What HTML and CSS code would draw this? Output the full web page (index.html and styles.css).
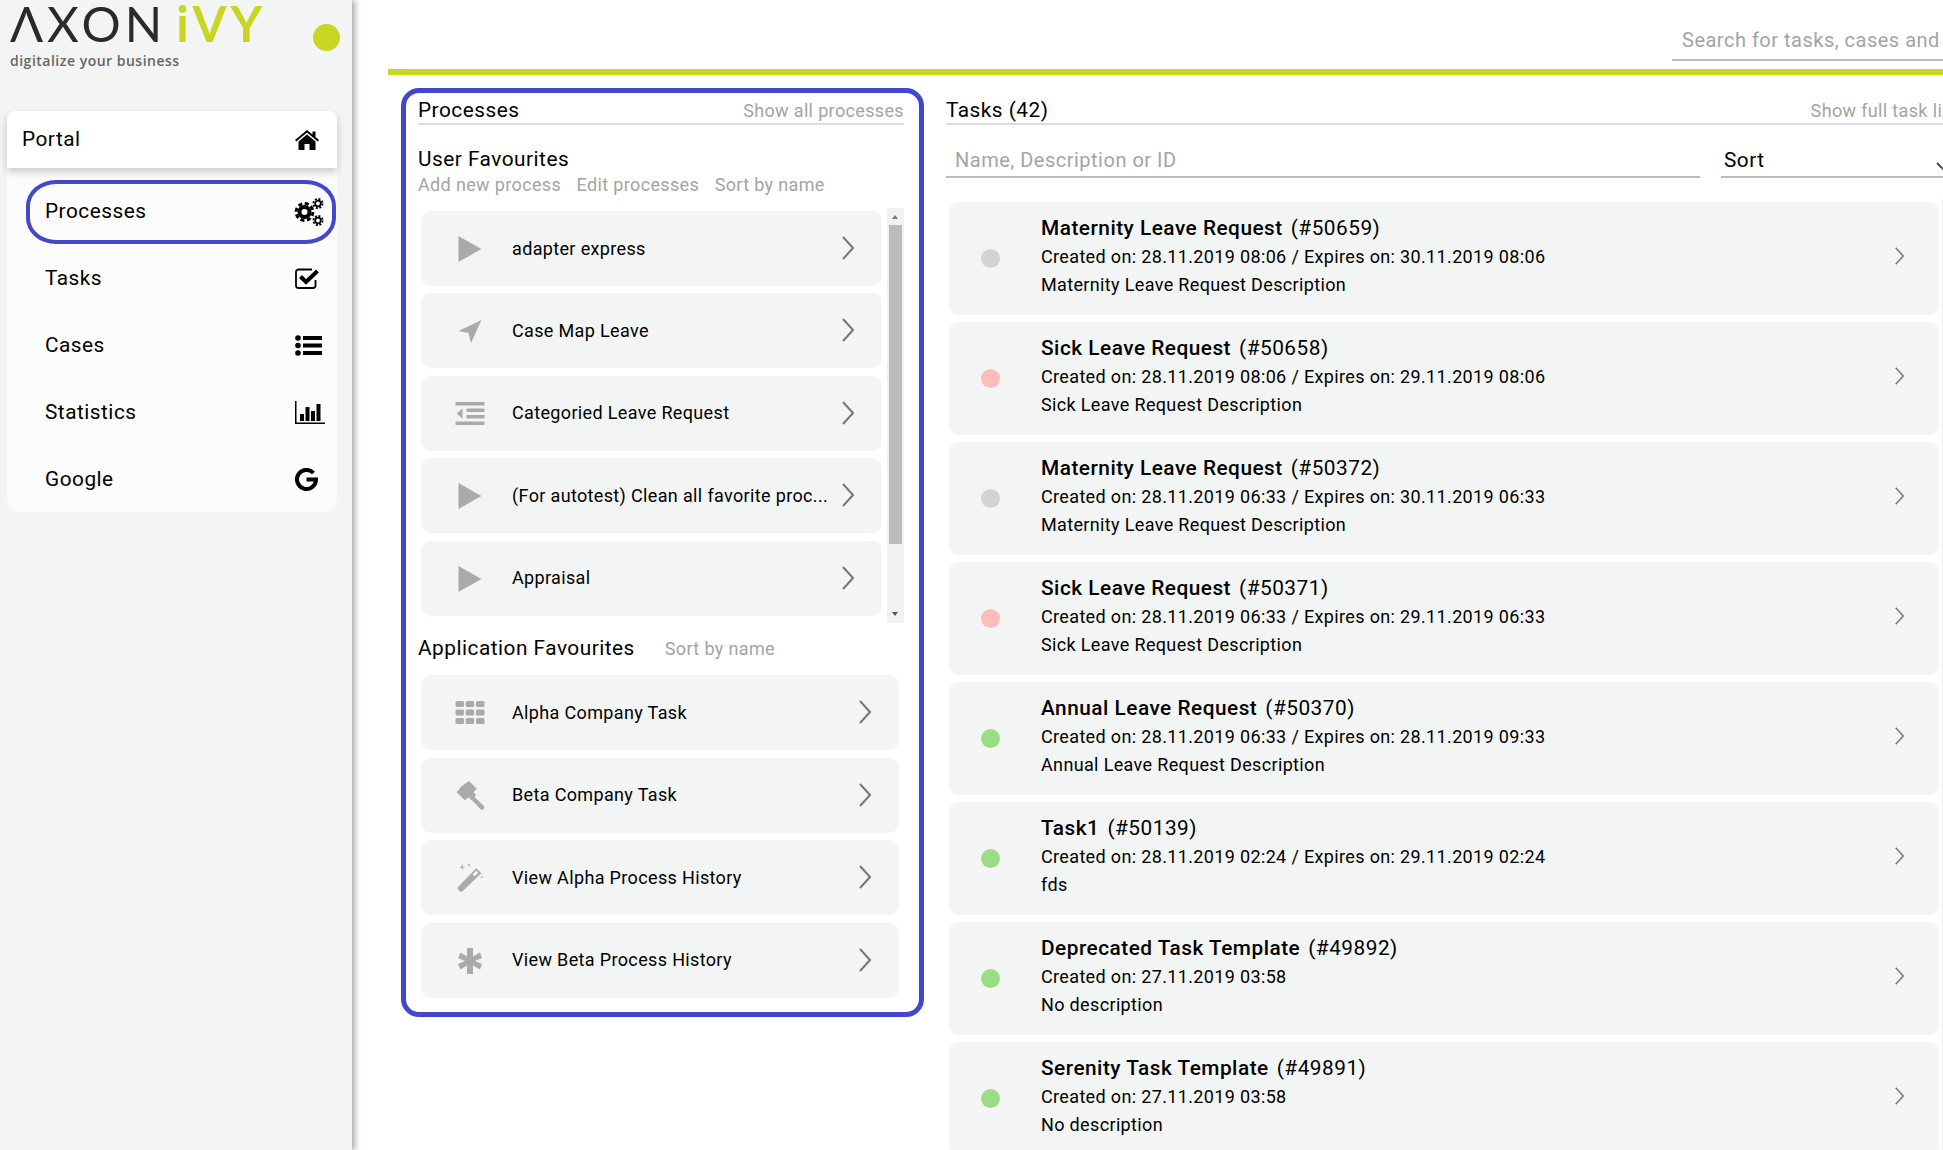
FILE: index.html
```html
<!DOCTYPE html>
<html lang="en">
<head>
<meta charset="utf-8">
<title>Axon Ivy Portal</title>
<link rel="stylesheet" href="styles.css">
</head>
<body>
<svg class="defs" width="0" height="0" aria-hidden="true">
  <defs>
    <symbol id="chev" viewBox="0 0 12 24"><path d="M1 1l10 11L1 23" fill="none" stroke="currentColor" stroke-width="2"/></symbol>
    <symbol id="play" viewBox="0 0 23 26"><path d="M0 0l23 13L0 26z"/></symbol>
    <symbol id="arrow" viewBox="0 0 23 23"><path d="M23 0L12.5 23 10 13 0 11z"/></symbol>
    <symbol id="outdent" viewBox="0 0 29 23"><path d="M0 0h29v3.5H0zM11 6.5h18V10H11zM11 13h18v3.5H11zM0 19.500h29V23H0zM7 6.500v10L1 11.500z"/></symbol>
    <symbol id="grid" viewBox="0 0 29 23"><g><rect width="8.500" height="6" rx="1.500"/><rect x="10.200" width="8.500" height="6" rx="1.500"/><rect x="20.500" width="8.500" height="6" rx="1.500"/><rect y="8.500" width="8.500" height="6" rx="1.500"/><rect x="10.200" y="8.500" width="8.500" height="6" rx="1.500"/><rect x="20.500" y="8.500" width="8.500" height="6" rx="1.500"/><rect y="17" width="8.500" height="6" rx="1.500"/><rect x="10.200" y="17" width="8.500" height="6" rx="1.500"/><rect x="20.500" y="17" width="8.500" height="6" rx="1.500"/></g></symbol>
    <symbol id="gavel" viewBox="0 0 28 29"><path d="M12.500 0l8 8-2.200 1.500-1 2 2.500 2.500-5 5-2.500-2.500-2 .8-1.800 2.200L0 11l2-1.800 1.300-2.200L5.500 5l2.500-2zM17.500 15.500l10 9.500c.8 1 .5 2-.5 3s-2 1.200-3 .3l-9.500-10z"/></symbol>
    <symbol id="wand" viewBox="0 0 26 28"><path fill-rule="evenodd" d="M18.500 5l5 5L5 27.500c-1 .7-1.500.5-2.300-.2L1 25.500c-.7-.8-.8-1.500 0-2.300zM18.500 7.500l-3.500 3.500 2 2 3.500-3.500z"/><path d="M5 1l.7 2.300L8 4l-2.300.7L5 7l-.7-2.300L2 4l2.300-.7zM11.500 0l.5 1.500 1.500.5-1.500.5-.5 1.500-.5-1.500L9.500 2l1.500-.5zM24 12l.4 1.200 1.200.4-1.200.4-.4 1.200-.4-1.200-1.200-.4 1.200-.4z"/></symbol>
    <symbol id="star" viewBox="0 0 23 26"><path d="M8.500 0h6v8.500L21.500 4.500l2 5.500-7 3 7 3-2 5.500-7-4V26h-6v-8.500l-6.500 4-2.500-5.500 7-3-7-3 2.500-5.500 6.500 4z"/></symbol>
  </defs>
</svg>

<aside class="sidebar">
  <div class="brand">
    <div class="logo">
      <div class="logo-word"><span class="logo-axon">ΛXON</span><span class="logo-ivy">iVY</span></div>
      <div class="logo-tag">digitalize your business</div>
    </div>
    <span class="status-dot"></span>
  </div>
  <nav class="menu">
    <div class="menu-root">
      <span>Portal</span>
      <svg class="nav-icon home" viewBox="0 0 24 20"><path d="M12 0L0 10l1.300 1.500L12 2.600l10.700 8.900L24 10l-3.500-3V1.500h-3v3z"/><path d="M12 4.500l-8.500 7V20h6v-6h5v6h6v-8.500z"/></svg>
    </div>
    <div class="menu-sub">
      <div class="menu-item"><span>Processes</span>
        <svg class="nav-icon cogs" viewBox="0 0 30 28" fill="none" stroke="#000">
          <circle cx="10.500" cy="14" r="5" stroke-width="4"/><circle cx="10.500" cy="14" r="8.400" stroke-width="3" stroke-dasharray="4 2.600"/>
          <circle cx="24" cy="5.500" r="2.800" stroke-width="1.800"/><circle cx="24" cy="5.500" r="4.600" stroke-width="1.800" stroke-dasharray="2 1.600"/>
          <circle cx="24" cy="22.500" r="2.800" stroke-width="1.800"/><circle cx="24" cy="22.500" r="4.600" stroke-width="1.800" stroke-dasharray="2 1.600"/>
        </svg>
      </div>
      <div class="menu-item"><span>Tasks</span>
        <svg class="nav-icon check" viewBox="0 0 25 21" fill="none" stroke="#000"><path d="M20.500 12v5.500a2.500 2.500 0 0 1-2.500 2.500H3.500A2.500 2.500 0 0 1 1 17.500V4a2.500 2.500 0 0 1 2.500-2.500H17" stroke-width="1.800"/><path d="M5.500 8.500l5.500 5.500L22.500 3" stroke-width="4"/></svg>
      </div>
      <div class="menu-item"><span>Cases</span>
        <svg class="nav-icon list" viewBox="0 0 27 21"><circle cx="3" cy="3" r="2.800"/><circle cx="3" cy="10.500" r="2.800"/><circle cx="3" cy="18" r="2.800"/><path d="M8 1h19v4H8zM8 8.500h19v4H8zM8 16h19v4H8z"/></svg>
      </div>
      <div class="menu-item"><span>Statistics</span>
        <svg class="nav-icon bars" viewBox="0 0 30 23"><path d="M0 0h1.500v21.500H30V23H0z"/><path d="M5 13h4v7H5zM10.500 6h4v14h-4zM16 10h4v10h-4zM21.500 3h4v17h-4z"/></svg>
      </div>
      <div class="menu-item"><span>Google</span>
        <svg class="nav-icon goog" viewBox="0 0 23 23" fill="none" stroke="#000" stroke-width="4"><path d="M18.500 5a9.500 9.500 0 1 0 2.500 6.500H11.500"/></svg>
      </div>
      <div class="ring ring-nav"></div>
    </div>
  </nav>
</aside>

<main class="main">
  <header class="topbar">
    <input class="search" type="text" placeholder="Search for tasks, cases and processes">
  </header>
  <div class="rule"></div>
  <div class="content">
    <section class="proc-col">
      <div class="head"><h2>Processes</h2><a class="link">Show all processes</a></div>
      <h3 class="fav-title">User Favourites</h3>
      <div class="links"><a class="link">Add new process</a><a class="link">Edit processes</a><a class="link">Sort by name</a></div>
      <div class="scroller">
        <ul class="cards cards-user">
          <li class="pcard"><svg class="pico ico-play"><use href="#play"/></svg><span class="pname">adapter express</span><svg class="chev"><use href="#chev"/></svg></li>
          <li class="pcard"><svg class="pico ico-arrow"><use href="#arrow"/></svg><span class="pname">Case Map Leave</span><svg class="chev"><use href="#chev"/></svg></li>
          <li class="pcard"><svg class="pico ico-wide"><use href="#outdent"/></svg><span class="pname">Categoried Leave Request</span><svg class="chev"><use href="#chev"/></svg></li>
          <li class="pcard"><svg class="pico ico-play"><use href="#play"/></svg><span class="pname">(For autotest) Clean all favorite proc...</span><svg class="chev"><use href="#chev"/></svg></li>
          <li class="pcard"><svg class="pico ico-play"><use href="#play"/></svg><span class="pname">Appraisal</span><svg class="chev"><use href="#chev"/></svg></li>
        </ul>
        <div class="scrollbar"><i class="sb-up"></i><b class="sb-thumb"></b><i class="sb-down"></i></div>
      </div>
      <div class="app-head"><h3>Application Favourites</h3><a class="link">Sort by name</a></div>
      <ul class="cards cards-app">
        <li class="pcard"><svg class="pico ico-wide"><use href="#grid"/></svg><span class="pname">Alpha Company Task</span><svg class="chev"><use href="#chev"/></svg></li>
        <li class="pcard"><svg class="pico ico-gavel"><use href="#gavel"/></svg><span class="pname">Beta Company Task</span><svg class="chev"><use href="#chev"/></svg></li>
        <li class="pcard"><svg class="pico ico-gavel"><use href="#wand"/></svg><span class="pname">View Alpha Process History</span><svg class="chev"><use href="#chev"/></svg></li>
        <li class="pcard"><svg class="pico ico-play"><use href="#star"/></svg><span class="pname">View Beta Process History</span><svg class="chev"><use href="#chev"/></svg></li>
      </ul>
      <div class="ring ring-panel"></div>
    </section>

    <section class="task-col">
      <div class="head"><h2>Tasks (42)</h2><a class="link">Show full task list</a></div>
      <div class="filters">
        <input class="filter" type="text" placeholder="Name, Description or ID">
        <div class="sort"><span>Sort</span><svg class="sort-chev" viewBox="0 0 14 8"><path d="M1 1l6 6 6-6" fill="none" stroke="#444" stroke-width="1.800"/></svg></div>
      </div>
      <ul class="tasks">
        <li class="task"><span class="dot grey"></span><div class="tbody"><div class="ttitle"><strong>Maternity Leave Request</strong><span>(#50659)</span></div><div class="tline">Created on: 28.11.2019 08:06 / Expires on: 30.11.2019 08:06</div><div class="tline">Maternity Leave Request Description</div></div><svg class="tchev"><use href="#chev"/></svg></li>
        <li class="task"><span class="dot pink"></span><div class="tbody"><div class="ttitle"><strong>Sick Leave Request</strong><span>(#50658)</span></div><div class="tline">Created on: 28.11.2019 08:06 / Expires on: 29.11.2019 08:06</div><div class="tline">Sick Leave Request Description</div></div><svg class="tchev"><use href="#chev"/></svg></li>
        <li class="task"><span class="dot grey"></span><div class="tbody"><div class="ttitle"><strong>Maternity Leave Request</strong><span>(#50372)</span></div><div class="tline">Created on: 28.11.2019 06:33 / Expires on: 30.11.2019 06:33</div><div class="tline">Maternity Leave Request Description</div></div><svg class="tchev"><use href="#chev"/></svg></li>
        <li class="task"><span class="dot pink"></span><div class="tbody"><div class="ttitle"><strong>Sick Leave Request</strong><span>(#50371)</span></div><div class="tline">Created on: 28.11.2019 06:33 / Expires on: 29.11.2019 06:33</div><div class="tline">Sick Leave Request Description</div></div><svg class="tchev"><use href="#chev"/></svg></li>
        <li class="task"><span class="dot green"></span><div class="tbody"><div class="ttitle"><strong>Annual Leave Request</strong><span>(#50370)</span></div><div class="tline">Created on: 28.11.2019 06:33 / Expires on: 28.11.2019 09:33</div><div class="tline">Annual Leave Request Description</div></div><svg class="tchev"><use href="#chev"/></svg></li>
        <li class="task"><span class="dot green"></span><div class="tbody"><div class="ttitle"><strong>Task1</strong><span>(#50139)</span></div><div class="tline">Created on: 28.11.2019 02:24 / Expires on: 29.11.2019 02:24</div><div class="tline">fds</div></div><svg class="tchev"><use href="#chev"/></svg></li>
        <li class="task"><span class="dot green"></span><div class="tbody"><div class="ttitle"><strong>Deprecated Task Template</strong><span>(#49892)</span></div><div class="tline">Created on: 27.11.2019 03:58</div><div class="tline">No description</div></div><svg class="tchev"><use href="#chev"/></svg></li>
        <li class="task"><span class="dot green"></span><div class="tbody"><div class="ttitle"><strong>Serenity Task Template</strong><span>(#49891)</span></div><div class="tline">Created on: 27.11.2019 03:58</div><div class="tline">No description</div></div><svg class="tchev"><use href="#chev"/></svg></li>
      </ul>
    </section>
  </div>
</main>
</body>
</html>
```

FILE: styles.css
```css
* { box-sizing: border-box; }
html, body { margin: 0; height: 100%; overflow: hidden; }
body {
  display: flex;
  width: 1943px;
  height: 1150px;
  background: #fff;
  color: #000;
  font-family: Roboto, "Liberation Sans", sans-serif;
  font-size: 18px;
  letter-spacing: 0.35px;
}
h2, h3 { margin: 0; font-weight: 400; font-size: 20.8px; line-height: 24px; letter-spacing: 0.5px; }
ul { list-style: none; margin: 0; padding: 0; }
.defs { position: absolute; }

/* sidebar */
.sidebar {
  flex: 0 0 352px;
  height: 100%;
  background: #f3f5f4;
  box-shadow: 3px 0 6px rgba(0, 0, 0, .35);
  position: relative;
  z-index: 2;
}
.brand {
  height: 111px;
  display: flex;
  justify-content: space-between;
  align-items: flex-start;
  padding-left: 10px;
  padding-right: 12px;
}
.logo-word { height: 46px; line-height: 46px; white-space: nowrap; }
.logo-axon {
  font-family: Lato, sans-serif;
  font-weight: 400;
  font-size: 49px;
  letter-spacing: 4px;
  color: #2a2a2a;
}
.logo-ivy {
  font-family: Lato, sans-serif;
  font-weight: 700;
  font-size: 49px;
  letter-spacing: 4px;
  color: #c8d522;
  margin-left: 10px;
}
.logo-tag {
  margin-top: 6px;
  font-family: "Open Sans", sans-serif;
  font-weight: 600;
  font-size: 14px;
  line-height: 18px;
  letter-spacing: 0.5px;
  color: #666;
}
.status-dot {
  width: 27px;
  height: 27px;
  margin-top: 24px;
  border-radius: 50%;
  background: #c8d522;
}
.menu { margin: 0 15px 0 7px; }
.menu-root {
  height: 57px;
  display: flex;
  align-items: center;
  justify-content: space-between;
  padding: 0 18px 2px 15px;
  background: #fff;
  border-radius: 8px 8px 0 0;
  box-shadow: 0 4px 8px rgba(0, 0, 0, .2);
  font-size: 20.8px;
  letter-spacing: 0.5px;
  position: relative;
  z-index: 1;
}
.menu-sub {
  position: relative;
  height: 344px;
  padding-top: 10px;
  background: #fcfcfc;
  border-radius: 0 0 14px 14px;
}
.menu-item {
  height: 67px;
  display: flex;
  align-items: center;
  padding: 0 0 2px 38px;
  font-size: 20.8px;
  letter-spacing: 0.5px;
  position: relative;
}
.nav-icon { position: absolute; }
.home { right: 18px; top: 19px; width: 24px; height: 20px; }
.cogs { left: 287px; top: 20px; width: 30px; height: 28px; }
.check { left: 288px; top: 23px; width: 25px; height: 21px; }
.list { left: 288px; top: 23px; width: 27px; height: 21px; }
.bars { left: 288px; top: 22px; width: 30px; height: 23px; }
.goog { left: 288px; top: 22px; width: 23px; height: 23px; }

/* annotation rings */
.ring { position: absolute; border: 5px solid #4148c9; pointer-events: none; }
.ring-nav { left: 19px; top: 12px; width: 310px; height: 64px; border-width: 4px; border-radius: 30px / 26px; }
.ring-panel { left: -17px; top: 13px; width: 523px; height: 929px; border-radius: 18px; }

/* main */
.main { flex: 1; min-width: 0; overflow: hidden; display: flex; flex-direction: column; }
.topbar { flex: none; height: 69px; display: flex; justify-content: flex-end; margin-right: -40px; padding-bottom: 8px; align-items: flex-end; }
.search {
  width: 311px;
  height: 40px;
  padding: 0 10px;
  border: 0;
  border-bottom: 2px solid #bbb;
  outline: 0;
  background: none;
  font: inherit;
  font-size: 20px;
  letter-spacing: 0.5px;
}
input::placeholder { color: #a4a4a4; opacity: 1; }
.rule { height: 6px; margin-left: 36px; background: #c8d522; flex: none; }
.content { display: flex; gap: 42px; padding-left: 66px; align-items: flex-start; width: 1680px; }
.proc-col { position: relative; flex: 0 0 486px; }
.task-col { flex: 0 0 1012px; }
.head {
  margin-top: 25px;
  height: 25px;
  display: flex;
  justify-content: space-between;
  align-items: baseline;
  border-bottom: 2px solid #ddd;
  line-height: 20px;
}
.head h2 { line-height: 20px; }
.link { color: #a4a4a4; font-size: 18px; white-space: nowrap; }
.fav-title { margin-top: 22px; }
.links { display: flex; gap: 15.5px; margin-top: 4px; line-height: 20px; height: 20px; }
.scroller { display: flex; gap: 5px; height: 415px; margin-top: 13px; }
.cards { padding-left: 3px; display: flex; flex-direction: column; }
.cards-user { flex: 0 0 464px; padding-top: 3px; gap: 7.4px; }
.cards-app { width: 481px; margin-top: 15px; gap: 7.5px; }
.pcard {
  height: 75px;
  flex: none;
  display: flex;
  align-items: center;
  background: #f3f5f4;
  border-radius: 10px;
  position: relative;
  padding: 0 0 1px 91px;
  font-size: 18px;
}
.pico { position: absolute; fill: #aaa; }
.ico-play { left: 37px; top: 25px; width: 24px; height: 26px; }
.ico-arrow { left: 37px; top: 27px; width: 24px; height: 23px; }
.ico-wide { left: 34px; top: 26px; width: 30px; height: 23px; }
.ico-gavel { left: 35px; top: 23px; width: 29px; height: 29px; }
.pname { white-space: nowrap; }
.chev { position: absolute; right: 28px; top: 25px; width: 12px; height: 24px; color: #777; }
.scrollbar { flex: 0 0 17px; background: #f1f1f1; position: relative; }
.sb-thumb { position: absolute; left: 2px; right: 2px; top: 17px; height: 319px; background: #bbb; }
.sb-up, .sb-down { position: absolute; left: 5px; width: 0; height: 0; border: 3.5px solid transparent; }
.sb-up { top: 4px; border-bottom: 4px solid #777; }
.sb-down { bottom: 4px; border-top: 4px solid #555; }
.app-head { display: flex; gap: 30px; align-items: baseline; margin-top: 13px; height: 24px; }

/* tasks */
.filters { display: flex; gap: 21px; margin-top: 23px; width: 1000px; }
.filter {
  width: 754px;
  height: 30px;
  padding: 0 9px 4px;
  border: 0;
  border-bottom: 2px solid #bbb;
  outline: 0;
  font: inherit;
  font-size: 20px;
  letter-spacing: 0.5px;
  background: none;
}
.sort {
  flex: 1;
  height: 30px;
  padding-left: 3px;
  border-bottom: 2px solid #bbb;
  font-size: 20.8px;
  letter-spacing: 0.5px;
  line-height: 24px;
  position: relative;
}
.sort-chev { position: absolute; left: 215px; top: 14px; width: 14px; height: 8px; }
.tasks {
  margin: 21px 0 0 3px;
  padding: 3px 3px 0 0;
  width: 994px;
  border-right: 1px solid #eee;
  display: flex;
  flex-direction: column;
  gap: 7px;
}
.task {
  height: 113px;
  flex: none;
  display: flex;
  align-items: center;
  background: #f3f5f4;
  border-radius: 10px;
  padding-left: 32px;
  position: relative;
}
.dot { width: 19px; height: 19px; border-radius: 50%; flex: none; }
.grey { background: #d3d3d3; }
.pink { background: #ffbcbc; }
.green { background: #9ade84; }
.tbody { margin-left: 41px; padding-bottom: 4px; }
.ttitle { font-size: 20.8px; letter-spacing: 0.5px; line-height: 29px; display: flex; gap: 8px; }
.ttitle strong { font-weight: 500; }
.tline { line-height: 28px; }
.tchev { position: absolute; right: 35px; top: 45px; width: 9px; height: 18px; color: #777; }
```
